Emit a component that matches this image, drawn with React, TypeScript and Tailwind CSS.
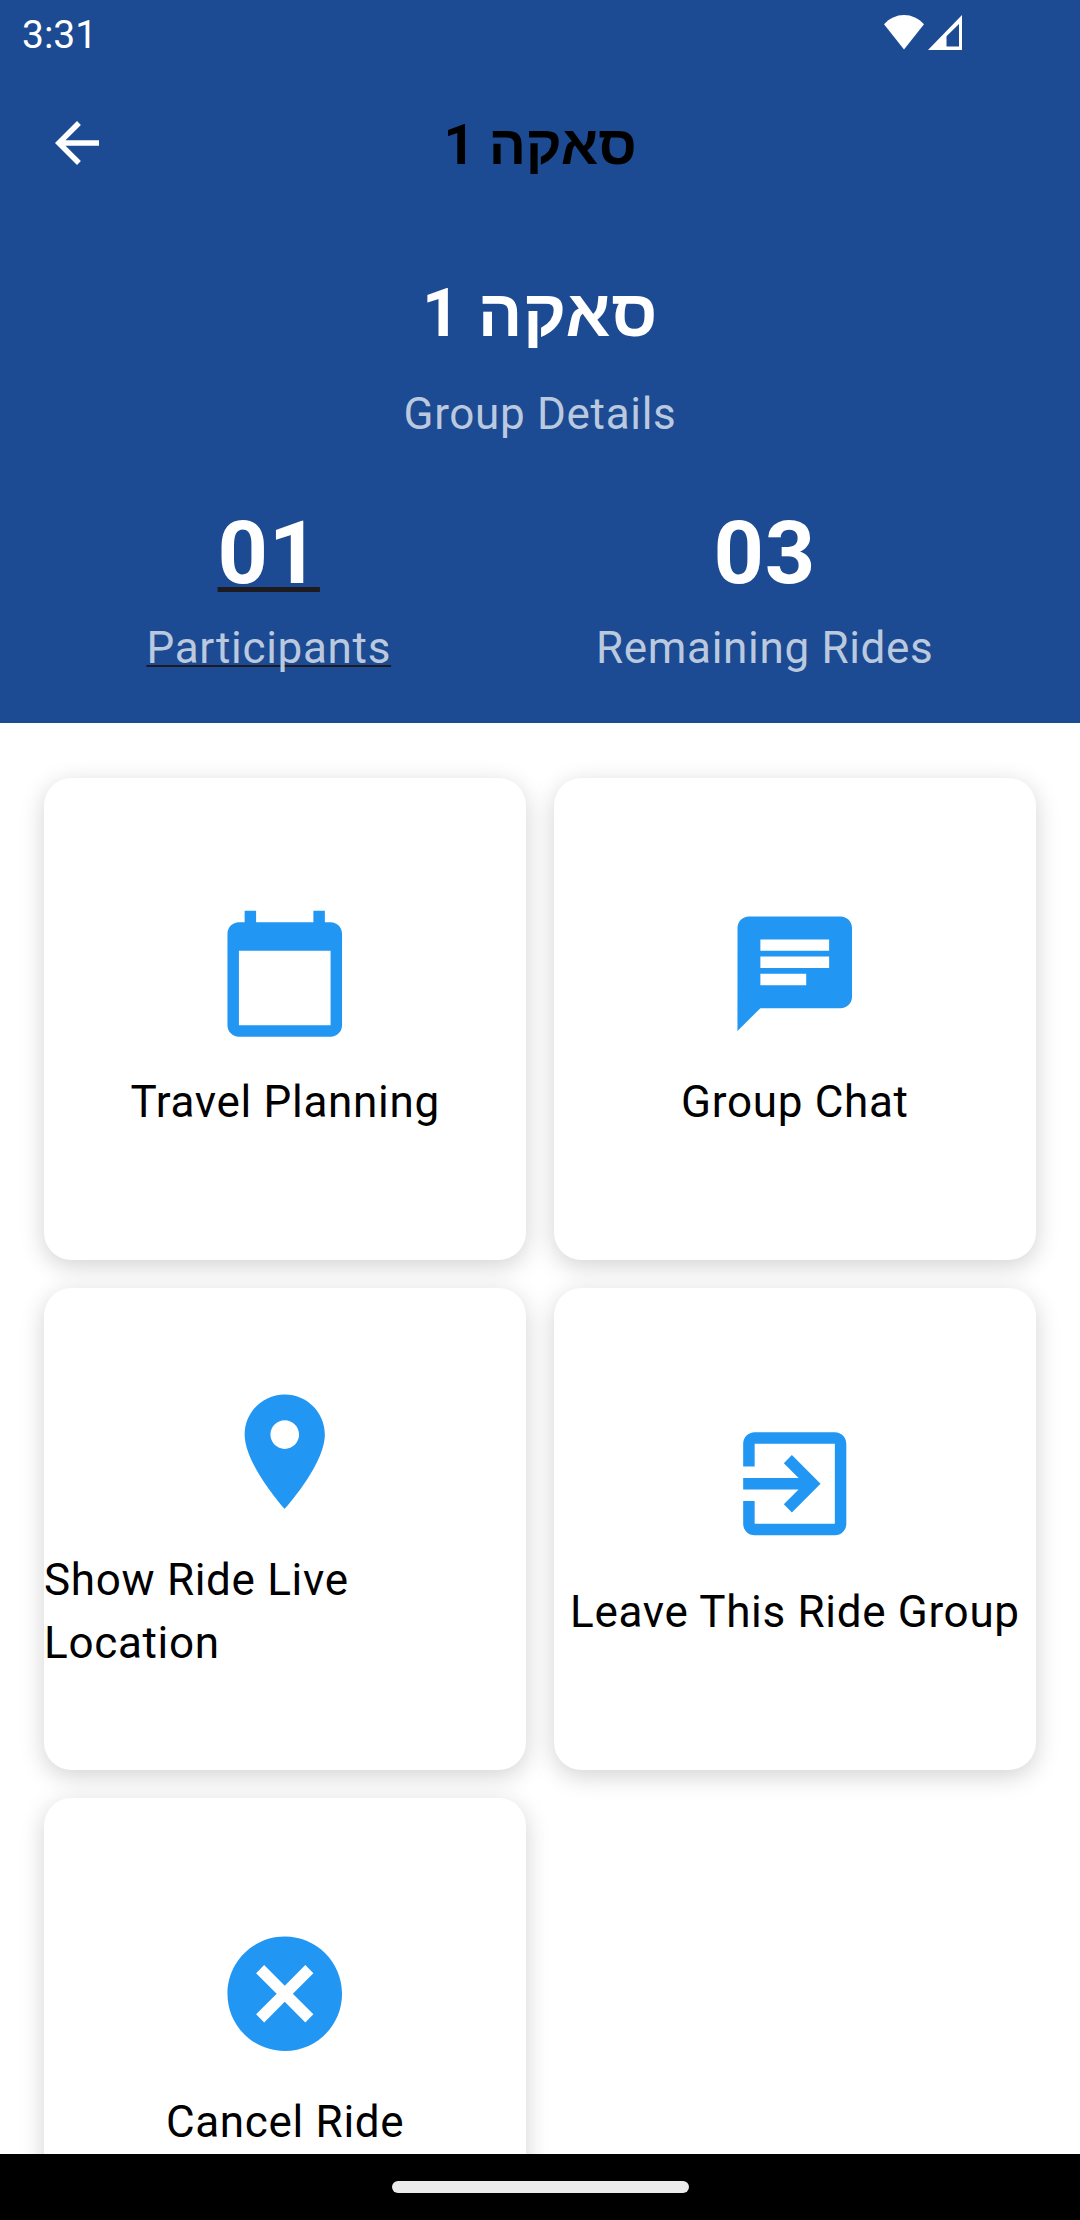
type IconProps = { d: string; className: string };

// Material icons on their usual 24-unit grid.
function Icon({ d, className }: IconProps) {
  return (
    <svg viewBox="0 0 24 24" fill="currentColor" className={className} aria-hidden="true">
      <path d={d} />
    </svg>
  );
}

const icons = {
  back: "M20 11H7.83l5.59-5.59L12 4l-8 8 8 8 1.41-1.41L7.83 13H20v-2z",
  calendar:
    "M20 3h-1V1h-2v2H7V1H5v2H4c-1.1 0-2 .9-2 2v16c0 1.1.9 2 2 2h16c1.1 0 2-.9 2-2V5c0-1.1-.9-2-2-2zm0 18H4V8h16v13z",
  chat: "M20 2H4c-1.1 0-1.99.9-1.99 2L2 22l4-4h14c1.1 0 2-.9 2-2V4c0-1.1-.9-2-2-2zM6 9h12v2H6V9zm8 5H6v-2h8v2zm4-6H6V6h12v2z",
  pin: "M12 2C8.13 2 5 5.13 5 9c0 5.25 7 13 7 13s7-7.75 7-13c0-3.87-3.13-7-7-7zm0 9.5c-1.38 0-2.5-1.12-2.5-2.5s1.12-2.5 2.5-2.5 2.5 1.12 2.5 2.5-1.12 2.5-2.5 2.5z",
  exit: "M10.09 15.59L11.5 17l5-5-5-5-1.41 1.41L12.67 11H3v2h9.67l-2.58 2.59zM19 3H5c-1.11 0-2 .9-2 2v4h2V5h14v14H5v-4H3v4c0 1.1.89 2 2 2h14c1.1 0 2-.9 2-2V5c0-1.1-.9-2-2-2z",
  cancel:
    "M12 2C6.47 2 2 6.47 2 12s4.47 10 10 10 10-4.47 10-10S17.53 2 12 2zm5 13.59L15.59 17 12 13.41 8.41 17 7 15.59 10.59 12 7 8.41 8.41 7 12 10.59 15.59 7 17 8.41 13.41 12 17 15.59z",
};

const actions = [
  { icon: icons.calendar, label: "Travel Planning" },
  { icon: icons.chat, label: "Group Chat" },
  { icon: icons.pin, label: "Show Ride Live Location" },
  { icon: icons.exit, label: "Leave This Ride Group" },
  { icon: icons.cancel, label: "Cancel Ride" },
];

function StatusBar() {
  return (
    <div className="flex h-[66px] items-start justify-between pl-[22px] pr-[118px] text-white">
      <span className="mt-3 text-[39px] leading-[46px]">3:31</span>
      <div className="mt-[15px] flex gap-1">
        <svg viewBox="0 0 40 35" className="h-[35px] w-10" fill="currentColor">
          <path d="M0 9.3C5.4 3.4 12.3 0 20 0s14.600 3.400 20 9.300L20 34.500z" />
        </svg>
        <svg viewBox="0 0 34 35" className="h-[35px] w-[34px]" fill="currentColor">
          <path fillRule="evenodd" d="M34 0v35H0zM31 9L18.500 21.300V31.500H31z" />
        </svg>
      </div>
    </div>
  );
}

function Stat({ value, label, linked }: { value: string; label: string; linked?: boolean }) {
  return (
    <div className="flex flex-col items-center [text-decoration-skip-ink:none]">
      <span
        className={
          "text-[88px] font-bold leading-[125.8px] tracking-[0.69px] text-white " +
          (linked ? "underline decoration-[#1d1b20] decoration-[5px] underline-offset-[4px]" : "")
        }
      >
        {value}
      </span>
      <span
        className={
          "mt-px text-[44px] leading-[62.9px] tracking-[0.69px] text-[#bbc9df] " +
          (linked ? "underline decoration-[#1d1b20] decoration-[2.2px] underline-offset-[2px]" : "")
        }
      >
        {label}
      </span>
    </div>
  );
}

export default function App() {
  return (
    <div className="flex h-[2220px] w-[1080px] flex-col overflow-hidden bg-white font-['Roboto','Liberation_Sans',sans-serif]">
      <header className="h-[723px] shrink-0 bg-[#1c4b93]">
        <StatusBar />
        <div className="grid h-[154px] grid-cols-[66px_1fr_66px] items-center px-11">
          <Icon d={icons.back} className="size-[66px] text-white" />
          <h1 dir="rtl" className="pt-1 text-center text-[55px] font-bold leading-[78px] text-black">
            סאקה 1
          </h1>
        </div>
        <div className="flex flex-col items-center px-11 pt-11">
          <h2 dir="rtl" className="h-[97px] text-[66px] font-bold leading-[99px] tracking-[0.69px] text-white">
            סאקה 1
          </h2>
          <p className="mt-[22px] text-[44px] leading-[62.9px] tracking-[0.69px] text-[#bbc9df]">Group Details</p>
          <div className="mt-11 flex w-full justify-around">
            <Stat value="01" label="Participants" linked />
            <Stat value="03" label="Remaining Rides" />
          </div>
        </div>
      </header>
      <main className="grid min-h-0 flex-1 grid-cols-2 content-start gap-[27.5px] overflow-hidden px-11 pt-[55px]">
        {actions.map((action) => (
          <button
            key={action.label}
            className="flex h-[482.25px] flex-col items-center justify-center gap-[27.5px] rounded-[27.5px] bg-white shadow-[0_6px_24px_rgba(0,0,0,0.18)]"
          >
            <Icon d={action.icon} className="size-[137.5px] shrink-0 text-[#2196f3]" />
            <span className="-mb-px pt-px text-left text-[44px] leading-[62.9px] tracking-[0.69px] text-black">
              {action.label}
            </span>
          </button>
        ))}
      </main>
      <footer className="flex h-[66px] shrink-0 items-center justify-center bg-black">
        <div className="h-3 w-[297px] rounded-full bg-[#ebebeb]" />
      </footer>
    </div>
  );
}
